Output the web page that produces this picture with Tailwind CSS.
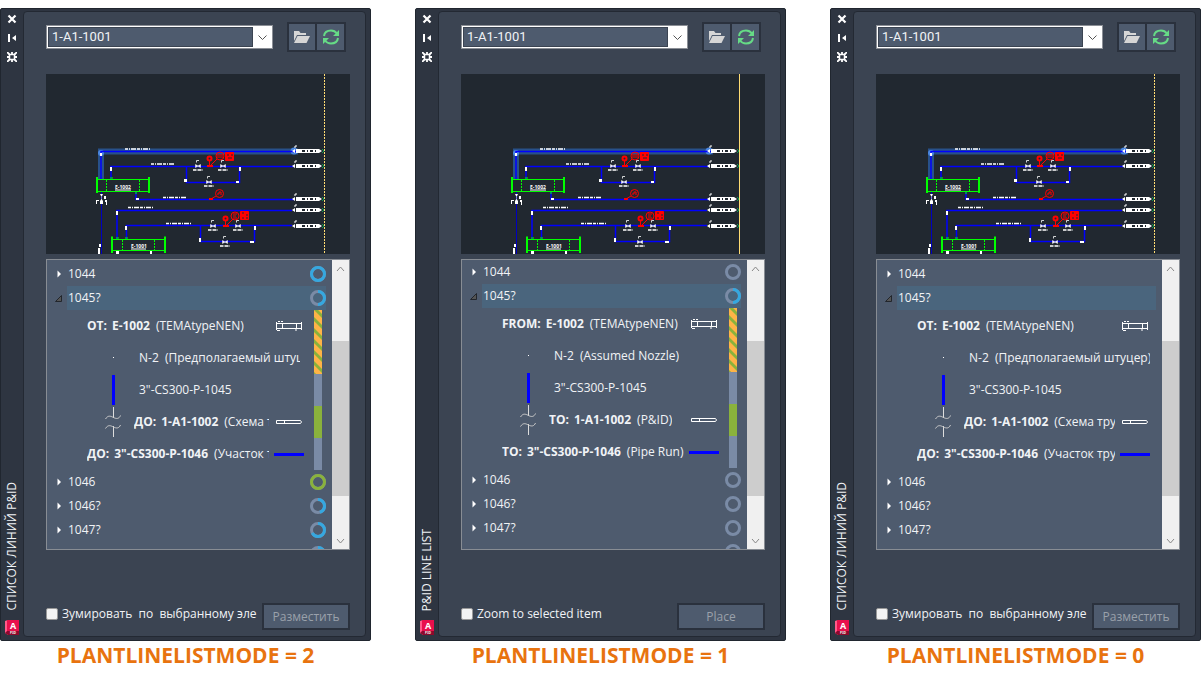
<!DOCTYPE html>
<html lang="ru">
<head>
  <meta charset="UTF-8" />
  <meta name="viewport" content="width=device-width, initial-scale=1" />
  <title>PLANTLINELISTMODE</title>
  <script src="https://cdn.jsdelivr.net/npm/@tailwindcss/browser@4"></script>
</head>
<body class="bg-white font-['Open_Sans','Noto_Sans',sans-serif] text-xs text-[#f1f3f6]">

  <!-- shared drawings -->
  <svg class="hidden">
    <symbol id="valve" viewBox="-6 -7 12 18" overflow="visible">
      <path d="M-2.500 -1.500V1.500L2.500 -1.500V1.500Z" fill="#fff" stroke="#fff" stroke-width=".5" />
      <path d="M-1.500 -3.500V-5.500H1" stroke="#fff" stroke-width=".8" fill="none" />
      <path d="M-5 4H5" stroke="#fff" stroke-width="1.500" stroke-dasharray="3 .5 1 .5" />
    </symbol>
    <symbol id="connector" viewBox="0 0 30 8" overflow="visible">
      <path d="M0 4l3-2v4z" fill="#fff" />
      <path d="M4 2H27L30 4L27 6H4Z" fill="#fff" />
      <path d="M10 4H26" stroke="#212830" stroke-width="2" stroke-dasharray="3 2 1 2" />
      <path d="M3 1V-1H5" stroke="#fff" fill="none" />
      <path d="M30 2l2 2-2 2" stroke="#0a9a4a" fill="none" />
    </symbol>
    <symbol id="schematic" viewBox="0 0 304 180">
      <rect width="304" height="180" fill="#212830" />
      <g fill="none" stroke="#2b5fa8">
        <path d="M55 105V77.500H252" stroke-width="6" opacity=".75" />
        <circle cx="55" cy="79" r="3" fill="#4a86e0" stroke="none" />
        <circle cx="248" cy="77" r="3.500" fill="#4a86e0" stroke="none" />
      </g>
      <g fill="none" stroke="#00f" stroke-width="1.500">
        <path d="M55 105V77.500H252M65 105V92.500H248M140.500 92.500V108.500H193.500V92.500M90 117V125.500H248M71 165V136.500H246M80.500 165V151.500H246M154.500 151.500V167.500H208.500V151.500" />
        <path d="M55.500 118V180" stroke="#0000c0" stroke-width="1" />
      </g>
      <!-- pipe tags -->
      <g stroke="#fff" stroke-width="1.500" stroke-dasharray="3 1 1 1 5 1">
        <path d="M79 75H104M105 90H129M117 123.500H141M82 133.500H107M120 149.500H145" />
      </g>
      <g fill="#fff">
        <path d="M54 79h2v3h-2zM64 93h2v4h-2zM138 105h3v3h-3zM193 93h2v4h-2zM190 107h3v2h-3zM90 124h3v2h-3zM70 137h2v4h-2zM79 152h2v4h-2zM153 164h2v4h-2zM208 152h2v4h-2zM204 167h4v2h-4zM70 177h3v3h-3zM104 177h2v3h-2z" />
        <path d="M50 126h3v1h-2v3h-1zM54 120h3l-2 4 2 3v3h-3v-3l2-3zM58 122h2v3h-2zM59 126h2v5h-1v-3h-1zM53 170h2v3h-2zM52 174h2v6h-2z" />
      </g>
      <!-- exchangers -->
      <g stroke="#0f0" fill="none">
        <path d="M51.500 105.500H103M51.500 117.500H103M67 165.500H119M67 176.500H119" />
        <path d="M51 103V119M103 103V119M66 162.500V179M119 162.500V179" stroke-width="2" />
        <path d="M60.500 106V117M93.500 106V117M76.500 166V176M108.500 166V176" stroke-dasharray="2 1" />
        <path d="M64 104h3M89 119h2M70 164h3M79 164h3" />
      </g>
      <g fill="#fff" font-family="Open Sans, sans-serif" font-weight="700" font-size="5" text-anchor="middle">
        <text x="77" y="115">E-1002</text>
        <text x="93" y="174">E-1001</text>
        <path d="M69 115.500h16v1H69zM85 174.500h15v1H85z" />
      </g>
      <!-- instruments -->
      <g fill="none" stroke="#f00">
        <path d="M163.500 87V92M165 91L171 85M165 125L170 122M179.500 146V152M181 151L187 145" />
        <path d="M161 91h6v2h-6zM163 124h4v2h-4zM177 151h6v2h-6z" fill="#f00" stroke="none" />
        <circle cx="163.500" cy="84.500" r="2" stroke-width="2" /><circle cx="179.500" cy="144.500" r="2" stroke-width="2" />
        <circle cx="174" cy="82" r="4" /><circle cx="189" cy="142" r="4" /><circle cx="173.500" cy="119.500" r="4" />
        <path d="M171 81h6M171 83h6M187 140h4M187 142h3M187 144h4M171 120h2v-2h2v3" />
        <path d="M179.500 78.500h8v8h-8zM194.500 137.500h8v8h-8z" fill="#f00" />
        <path d="M181 81h2M185 81h2M182 84h4M196 139h2M200 141h2M196 144h2M200 144h2" stroke="#212830" />
      </g>
      <use href="#valve" x="146" y="85" width="12" height="18" />
      <use href="#valve" x="171" y="85" width="12" height="18" />
      <use href="#valve" x="157" y="101" width="12" height="18" />
      <use href="#valve" x="161" y="145" width="12" height="18" />
      <use href="#valve" x="186" y="145" width="12" height="18" />
      <use href="#valve" x="173" y="161" width="12" height="18" />
      <use href="#connector" x="246" y="73" width="30" height="8" />
      <use href="#connector" x="246" y="88" width="30" height="8" />
      <use href="#connector" x="246" y="121" width="30" height="8" />
      <use href="#connector" x="246" y="132" width="30" height="8" />
      <use href="#connector" x="246" y="148" width="30" height="8" />
    </symbol>
    <symbol id="exchanger" viewBox="0 0 30 12">
      <path d="M2.500 2V10M27.500 2V10M2 3.500H28M2 8.500H28M8.500 3V9M22.500 3V9M7 1.500H9M21 10H23M3 10.500H6M4 1.500H6" fill="none" stroke="#fff" />
    </symbol>
    <symbol id="sheet" viewBox="0 0 30 12">
      <path d="M2.500 4.500H26.500L27.500 6L26.500 7.500H2.500ZM10.500 4.500V7.500" fill="none" stroke="#fff" />
    </symbol>
    <symbol id="run" viewBox="0 0 30 12"><path d="M0 5H30V8H0Z" fill="#00f" /></symbol>
    <symbol id="dot" viewBox="0 0 16 32"><path d="M8 15h1v1H8z" fill="#fff" /></symbol>
    <symbol id="pipe" viewBox="0 0 16 32"><path d="M7 1h3v30H7z" fill="#00f" /></symbol>
    <symbol id="break" viewBox="0 0 16 32">
      <path d="M8.500 1V12M8.500 20V31" stroke="#ddd" />
      <path d="M0.500 13C3 9 5.500 10 8.500 11.500S14 13 15.500 9.500M0.500 22.500C3 18.500 5.500 19.500 8.500 21S14 22.500 15.500 19" fill="none" stroke="#ccc" />
    </symbol>
  </svg>

  <main id="panels" class="grid grid-cols-3 gap-[44px] pt-2"></main>

  <script>
    const ru = {
      title: "СПИСОК ЛИНИЙ P&amp;ID", from: "ОТ:", to: "ДО:", nozzle: "(Предполагаемый штуцер)",
      pid: "(Схема трубопроводов)", run: "(Участок трубопровода)",
      zoom: "Зумировать &nbsp;по &nbsp;выбранному эле", place: "Разместить",
    };
    const en = {
      title: "P&amp;ID LINE LIST", from: "FROM:", to: "TO:", nozzle: "(Assumed Nozzle)",
      pid: "(P&amp;ID)", run: "(Pipe Run)", zoom: "Zoom to selected item", place: "Place",
    };
    const BLUE = "#35a8e0", GREEN = "#8ab23c";
    // rings: [colour, percent filled]
    const modes = [
      { mode: 2, t: ru, pad: "pt-[2px]", rings: [[BLUE, 100], [BLUE, 50], [GREEN, 100], [BLUE, 45], [BLUE, 67], [BLUE, 30]] },
      { mode: 1, t: en, pad: "pt-0", rings: [[BLUE, 0], [BLUE, 50], [BLUE, 0], [BLUE, 0], [BLUE, 0], [BLUE, 0]] },
      { mode: 0, t: ru, pad: "pt-[2px]", rings: null },
    ];

    const ring = (r) => r ? `
      <svg class="size-4 shrink-0 overflow-visible" viewBox="0 0 16 16" fill="none" stroke-width="3">
        <circle cx="8" cy="8" r="6.500" stroke="#7a8ba6" />
        ${r[1] ? `<circle cx="8" cy="8" r="6.500" stroke="${r[0]}" pathLength="100" stroke-dasharray="${r[1]} 100" transform="rotate(-90 8 8)" />` : ""}
      </svg>` : "";

    const row = (name, r) => `
      <li class="flex h-6 items-center pl-[9px]">
        <svg class="h-2 w-[10px] shrink-0" viewBox="0 0 10 8"><path d="M1.500 0.500L5 4L1.500 7.500Z" fill="#fff" /></svg>
        <span class="flex-1 pl-[2px]">${name}</span>${ring(r)}
      </li>`;

    const end = (icon) => `<svg class="ml-auto h-3 w-[30px] shrink-0"><use href="#${icon}" /></svg>`;
    const sym = (icon) => `<svg class="h-8 w-4 shrink-0"><use href="#${icon}" /></svg>`;
    const label = (dir, tag, rest) => `<span class="truncate text-clip"><b class="mr-[5px]">${dir}</b><b class="mr-[6px]">${tag}</b>${rest}</span>`;

    function panel({ mode, t, pad, rings }) {
      const r = (i) => rings ? rings[i] : null;
      return `
      <figure class="flex min-w-0 flex-col">
        <section class="flex rounded-xs border border-[#20262f] bg-[#2e3541] pt-[2px] pr-1 pb-[3px]">
          <div class="flex w-[22px] shrink-0 flex-col items-center gap-[9px] pt-[3px] pb-px">
            <button aria-label="Close"><svg class="size-[10px]" viewBox="0 0 10 10"><path d="M1.500 1.500L8.500 8.500M8.500 1.500L1.500 8.500" stroke="#fff" stroke-width="2.200" /></svg></button>
            <button aria-label="Auto-hide"><svg class="size-[10px]" viewBox="0 0 10 10" fill="#fff"><path d="M1 1h2v8H1zM9 2v6L5 5z" /></svg></button>
            <button aria-label="Properties"><svg class="size-[10px]" viewBox="0 0 10 10" fill="none" stroke="#fff"><rect x="2.500" y="2.500" width="5" height="5" stroke-width="1.500" /><path d="M0 0L3 3M10 0L7 3M0 10L3 7M10 10L7 7M5 0V2M5 8V10M0 5H2M8 5H10" stroke-width="1.800" /></svg></button>
            <h2 class="mt-auto rotate-180 font-normal [writing-mode:vertical-rl]">${t.title}</h2>
            <svg class="h-4 w-[14px]" viewBox="0 0 14 16">
              <path d="M0 1L3 0V15L0 13Z" fill="#ff5a8a" /><path d="M2 0H14V11H2Z" fill="#e8104c" /><path d="M2 11H14V15H3L0 13Z" fill="#8c0a2c" />
              <text x="8" y="9" font-size="9" font-weight="700" fill="#fff" text-anchor="middle">A</text>
              <text x="8" y="14" font-size="3" font-weight="700" fill="#fff" text-anchor="middle">P3D</text>
            </svg>
          </div>
          <div class="min-w-0 flex-1 rounded-sm border border-[#232933] bg-[#3b4452] pt-[10px] pr-[15px] pb-[6px] pl-[22px]">
            <div class="flex items-center gap-[14px] pr-1">
              <div class="flex h-6 flex-1 items-center border border-[#8b8f96] bg-white p-px">
                <select aria-label="Drawing" class="h-full min-w-0 flex-1 appearance-none border border-[#3b4452] bg-[#4e5b6e] px-[3px] font-['Roboto',sans-serif] text-[13px] leading-4">
                  <option>1-A1-1001</option>
                </select>
                <svg class="pointer-events-none h-2 w-[18px] shrink-0" viewBox="0 0 18 8"><path d="M5.500 2.500L9.500 6.500L13.500 2.500" fill="none" stroke="#555" /></svg>
              </div>
              <div class="flex divide-x-2 divide-[#2a313d] border-2 border-[#2a313d] bg-[#4e5b6e]">
                <button aria-label="Open" class="flex h-[26px] w-7 items-center justify-center">
                  <svg class="h-3 w-4" viewBox="0 0 16 12" fill="#d6d6d6"><path d="M0 0H5L6.500 2H12V4H3L0 10Z" /><path d="M3.500 5H16L12.500 12H0Z" /></svg>
                </button>
                <button aria-label="Refresh" class="flex h-[26px] w-[27px] items-center justify-center">
                  <svg class="h-4 w-[18px]" viewBox="0 0 18 16" fill="none" stroke="#66db86" stroke-width="2">
                    <path d="M2 7C2.500 3.500 5.500 1.500 9 1.500C11.500 1.500 13.500 2.500 15 4.500M16 9C15.500 12.500 12.500 14.500 9 14.500C6.500 14.500 4.500 13.500 3 11.500" />
                    <path d="M17 1V7H11ZM1 15V9H7Z" fill="#66db86" stroke="none" />
                  </svg>
                </button>
              </div>
            </div>
            <svg class="mt-[22px] block w-full" viewBox="0 0 304 180" role="img" aria-label="P&amp;ID">
              <use href="#schematic" width="304" height="180" />
              <path d="M278.500 0V180" stroke="#ffdc73" ${mode === 1 ? "" : 'stroke-dasharray="2 1"'} />
            </svg>
            <div class="mt-[5px] flex h-[291px] border border-[#888d94] bg-[#4e5b6e]">
              <ul class="h-full min-w-0 flex-1 overflow-hidden pr-[6px] ${pad}">
                ${row("1044", r(0))}
                <li>
                  <div class="flex h-6 items-center pl-[7px]">
                    <svg class="size-[13px] shrink-0" viewBox="0 0 13 13"><path d="M1.500 9.500H7.500V3.500Z" fill="#555" stroke="#22262c" /></svg>
                    <div class="flex h-full flex-1 items-center bg-[#4a657d] pl-px"><span class="flex-1">1045?</span>${ring(r(1))}</div>
                  </div>
                  <div class="flex ${rings ? "gap-[10px] pr-1" : "pr-[6px]"}">
                    <ul class="min-w-0 flex-1">
                      <li class="flex h-8 items-center gap-[5px] pl-10">${label(t.from, "E-1002", "(TEMAtypeNEN)")}${end("exchanger")}</li>
                      <li class="flex h-8 items-center gap-[18px] pl-[58px] ${rings ? "pr-1" : "pr-0"}">${sym("dot")}<span class="truncate text-clip">N-2 &nbsp;${t.nozzle}</span></li>
                      <li class="flex h-8 items-center gap-[18px] pl-[58px]">${sym("pipe")}<span class="truncate text-clip">3"-CS300-P-1045</span></li>
                      <li class="flex h-8 items-center gap-[5px] pl-[58px]">${sym("break")}<div class="flex min-w-0 pl-2">${label(t.to, "1-A1-1002", t.pid)}</div>${end("sheet")}</li>
                      <li class="flex h-8 items-center gap-[5px] pl-10">${label(t.to, '3"-CS300-P-1046', t.run)}${end("run")}</li>
                    </ul>
                    ${rings ? `
                    <div class="w-2 shrink-0">
                      <svg class="block h-16 w-2" viewBox="0 0 8 64">
                        <rect width="8" height="64" fill="#ffb347" />
                        <path d="M-2 -4L10 8M-2 7L10 19M-2 18L10 30M-2 29L10 41M-2 40L10 52M-2 51L10 63M-2 62L10 74" stroke="#8ab23c" stroke-width="3" />
                      </svg>
                      <div class="h-8 bg-[#7a8ba6]"></div><div class="h-8 bg-[#8ab23c]"></div><div class="h-8 bg-[#7a8ba6]"></div>
                    </div>` : ""}
                  </div>
                </li>
                ${row("1046", r(2))}${row("1046?", r(3))}${row("1047?", r(4))}
                ${rings ? `<li class="flex h-6 items-center justify-end">${ring(r(5))}</li>` : ""}
              </ul>
              <div class="flex w-[17px] shrink-0 flex-col bg-[#f0f0f0]">
                <button aria-label="Scroll up" class="flex h-[17px] items-center justify-center"><svg class="h-2 w-[9px]" viewBox="0 0 9 8"><path d="M1 6L4.500 2L8 6" fill="none" stroke="#888" /></svg></button>
                <div class="mt-16 h-[155px] bg-[#cdcdcd]"></div>
                <button aria-label="Scroll down" class="mt-auto flex h-[17px] items-center justify-center"><svg class="h-2 w-[9px]" viewBox="0 0 9 8"><path d="M1 2L4.500 6L8 2" fill="none" stroke="#888" /></svg></button>
              </div>
            </div>
            <div class="mt-[53px] flex items-start justify-between">
              <label class="flex h-[22px] min-w-0 items-center gap-1 whitespace-nowrap">
                <input type="checkbox" class="size-3 shrink-0 appearance-none rounded-xs border border-[#999] bg-[#f3f3f3]" />${t.zoom}
              </label>
              <button disabled class="h-[27px] w-[88px] border-2 border-[#2a313d] bg-[#4e5b6e] text-[#9aa1ab]">${t.place}</button>
            </div>
          </div>
        </section>
        <figcaption class="text-center font-['Open_Sans',sans-serif] text-[21px] leading-7 font-bold text-[#e8730f]">PLANTLINELISTMODE = ${mode}</figcaption>
      </figure>`;
    }

    document.getElementById("panels").innerHTML = modes.map(panel).join("");
  </script>
</body>
</html>
